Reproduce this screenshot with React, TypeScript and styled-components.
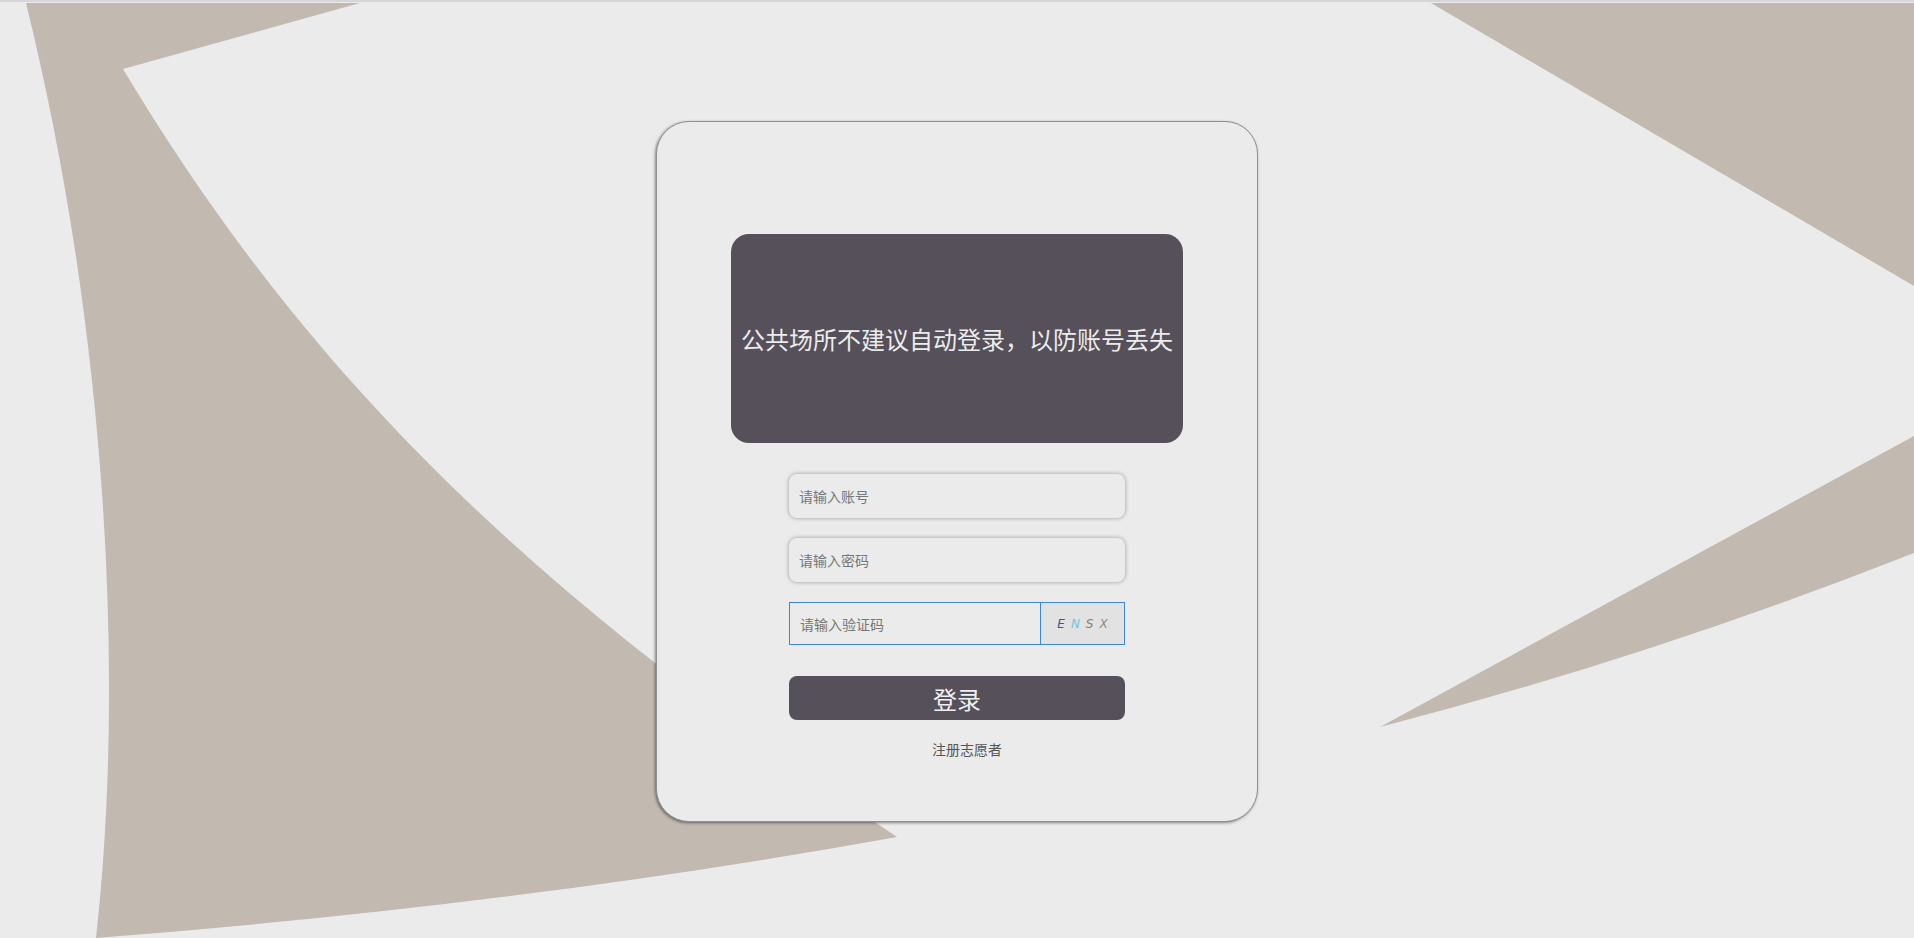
import styled, {createGlobalStyle} from "styled-components";

const GlobalStyle = createGlobalStyle`
  * {
    box-sizing: border-box;
  }
  body {
    margin: 0;
    background: #ebebeb;
    font-family: "Noto Sans CJK SC", "Noto Sans", sans-serif;
  }
`

const captcha = [
  {ch: 'E', color: '#4b4aa6'},
  {ch: 'N', color: '#6ec7d7'},
  {ch: 'S', color: '#7c8a62'},
  {ch: 'X', color: '#8a8a8a'},
]

const Backdrop = () => (
  <StyledBackdrop viewBox="0 0 1914 936" preserveAspectRatio="none">
    <path
      d="M26,1 L360,1 L123,67 C303,367 522,585 897,835 Q520,903 96,936 C128,650 100,300 26,1 Z"
      fill="#c2b9b0"
    />
    <path d="M1431,1 L1914,1 L1914,284 Z" fill="#c2b9b0"/>
    <path d="M1380,725 L1914,434 L1914,551 Q1647,656 1380,725 Z" fill="#c2b9b0"/>
  </StyledBackdrop>
)

export default function App() {
  return (
    <StyledPage>
      <GlobalStyle/>
      <Backdrop/>
      <StyledCard>
        <StyledNotice>公共场所不建议自动登录，以防账号丢失</StyledNotice>
        <StyledForm>
          <StyledInput placeholder="请输入账号"/>
          <StyledInput type="password" placeholder="请输入密码"/>
          <StyledCaptchaRow>
            <StyledCaptchaInput placeholder="请输入验证码"/>
            <StyledCaptchaCode>
              {captcha.map((c) => (
                <StyledCaptchaChar key={c.ch} color={c.color}>{c.ch}</StyledCaptchaChar>
              ))}
            </StyledCaptchaCode>
          </StyledCaptchaRow>
          <StyledButton>登录</StyledButton>
          <StyledLink href="#">注册志愿者</StyledLink>
        </StyledForm>
      </StyledCard>
    </StyledPage>
  );
}

const StyledPage = styled.main`
  position: relative;
  min-height: 100vh;
  border-top: 2px solid #d8d5d8;
  display: flex;
  justify-content: center;
  align-items: flex-start;
  padding-top: 119px;
  overflow: hidden;
`

const StyledBackdrop = styled.svg`
  position: absolute;
  left: 0;
  top: 0;
  width: 100%;
  height: 100%;
  z-index: 0;
`

const StyledCard = styled.section`
  position: relative;
  z-index: 1;
  width: 602px;
  height: 701px;
  background: #ebebeb;
  border: 1px solid #8f8f8f;
  border-radius: 33px;
  box-shadow: -1px 1px 3px rgba(0, 0, 0, 0.45);
  display: flex;
  flex-direction: column;
  align-items: center;
  padding-top: 112px;
`

const StyledNotice = styled.div`
  width: 452px;
  height: 209px;
  background: #555059;
  border-radius: 18px;
  display: flex;
  align-items: center;
  justify-content: center;
  color: #ececec;
  font-size: 24px;
  white-space: nowrap;
`

const StyledForm = styled.div`
  width: 336px;
  margin-top: 31px;
  display: flex;
  flex-direction: column;
  align-items: center;
  gap: 20px;
`

const StyledInput = styled.input`
  width: 100%;
  height: 44px;
  border: none;
  border-radius: 8px;
  background: #ebebeb;
  box-shadow: 0 0 4px rgba(0, 0, 0, 0.35);
  padding: 0 10px;
  font-family: inherit;
  font-size: 14px;
  color: #333;
  outline: none;

  &::placeholder {
    color: #777;
  }
`

const StyledCaptchaRow = styled.div`
  width: 100%;
  height: 43px;
  display: flex;
`

const StyledCaptchaInput = styled.input`
  flex: 1;
  min-width: 0;
  height: 100%;
  border: 1px solid #3c88d4;
  border-right: none;
  background: #ebebeb;
  padding: 0 10px;
  font-family: inherit;
  font-size: 14px;
  outline: none;

  &::placeholder {
    color: #777;
  }
`

const StyledCaptchaCode = styled.div`
  width: 85px;
  height: 100%;
  border: 1px solid #3c88d4;
  background: #e2e2e2;
  display: flex;
  align-items: center;
  justify-content: center;
  gap: 6px;
`

const StyledCaptchaChar = styled.span<{ color: string }>`
  font-family: "DejaVu Sans", sans-serif;
  font-size: 12px;
  font-style: italic;
  color: ${(p) => p.color};
`

const StyledButton = styled.button`
  width: 100%;
  height: 44px;
  margin-top: 11px;
  border: none;
  border-radius: 8px;
  background: #555059;
  color: #f0f0f0;
  font-family: inherit;
  font-size: 24px;
  cursor: pointer;
`

const StyledLink = styled.a`
  margin-top: -1px;
  padding-left: 20px;
  font-size: 14px;
  color: #555;
  text-decoration: none;
`
